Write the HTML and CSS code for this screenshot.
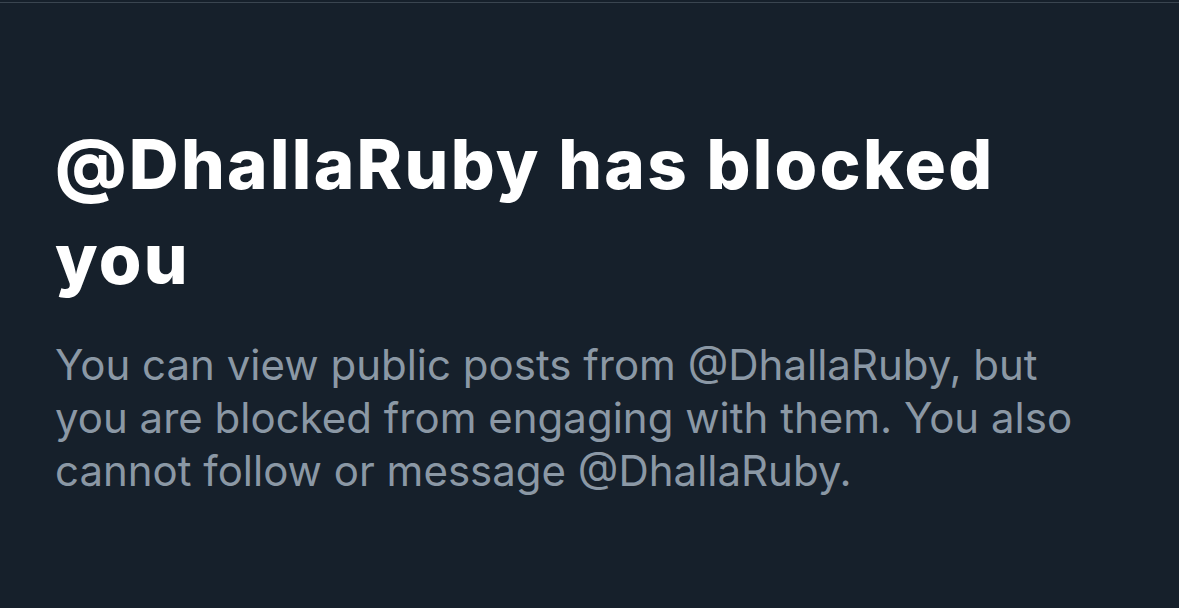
FILE: index.html
```html
<!DOCTYPE html>
<html lang="en">
<head>
<meta charset="utf-8">
<title>Blocked</title>
<link rel="stylesheet" href="styles.css">
</head>
<body>
<div class="page">
  <div class="topline"></div>
  <main class="content">
    <h1 class="title">@DhallaRuby has blocked you</h1>
    <p class="desc">You can view public posts from @DhallaRuby, but you are blocked from engaging with them. You also cannot follow or message @DhallaRuby.</p>
  </main>
</div>
</body>
</html>
```
FILE: styles.css
```css
html, body {
  margin: 0;
  padding: 0;
  background: #16202b;
}
.page {
  width: 1179px;
  height: 608px;
  background: #16202b;
  overflow: hidden;
  font-family: Inter, "Liberation Sans", Arial, sans-serif;
}
.topline {
  margin-top: 2px;
  height: 1px;
  background: #3a4550;
}
.content {
  padding: 114px 0 0 55px;
  width: 1060px;
}
.title {
  margin: 0;
  color: #ffffff;
  font-size: 69px;
  line-height: 95px;
  font-weight: 800;
  letter-spacing: 2.3px;
  width: 1050px;
}
.desc {
  margin: 31px 0 0;
  color: #8b98a5;
  font-size: 42px;
  line-height: 53px;
  font-weight: 400;
  width: 1050px;
}
```
